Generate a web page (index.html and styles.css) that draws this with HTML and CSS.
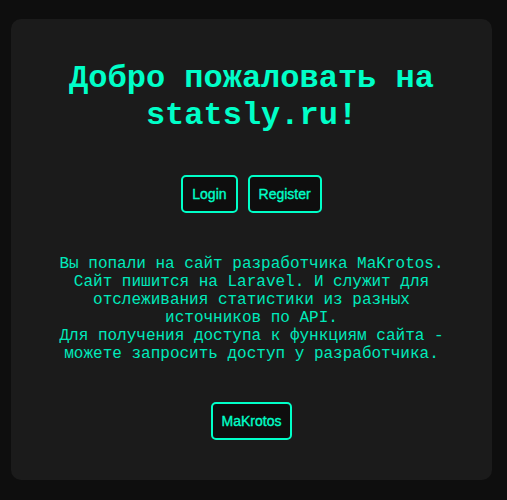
FILE: index.html
```html
<!DOCTYPE html>
<html lang="ru">
<head>
<meta charset="utf-8">
<title>statsly.ru</title>
<link rel="stylesheet" href="styles.css">
</head>
<body>
<main class="card">
  <h1 class="title">Добро пожаловать на statsly.ru!</h1>
  <div class="actions">
    <a class="btn" href="#">Login</a>
    <a class="btn" href="#">Register</a>
  </div>
  <p class="about">Вы попали на сайт разработчика MaKrotos. Сайт пишится на Laravel. И служит для отслеживания статистики из разных источников по API.<br>Для получения доступа к функциям сайта - можете запросить доступ у разработчика.</p>
  <div class="actions author">
    <a class="btn" href="#">MaKrotos</a>
  </div>
</main>
</body>
</html>
```

FILE: styles.css
```css
html, body {
  margin: 0;
  padding: 0;
  background: #0e0e0e;
}

body {
  padding: 19px 15px 20px 11px;
  font-family: "Courier New", "Nimbus Mono PS", "Nimbus Mono L", "FreeMono", "Liberation Mono", monospace;
  color: #00ffc8;
}

.card {
  background: #1b1b1b;
  border-radius: 10px;
  padding: 41px 40px 40px;
  display: flex;
  flex-direction: column;
  align-items: center;
  text-align: center;
}

.title {
  margin: 0 0 40.5px;
  font-size: 32px;
  font-weight: bold;
  line-height: normal;
}

.actions {
  display: flex;
  gap: 10px;
  justify-content: center;
}

.btn {
  display: block;
  padding: 9px;
  border: 2px solid #00ffc8;
  border-radius: 5px;
  background: #0e0e0e;
  color: #00ffc8;
  font-family: "Liberation Sans", Arial, sans-serif;
  font-weight: normal;
  font-size: 14px;
  line-height: 16px;
  text-decoration: none;
  -webkit-text-stroke: 0.35px #00ffc8;
}

.about {
  margin: 42px 0 0;
  font-size: 16px;
  line-height: normal;
  color: #00eabb;
}

.author {
  margin-top: 39px;
}
```
